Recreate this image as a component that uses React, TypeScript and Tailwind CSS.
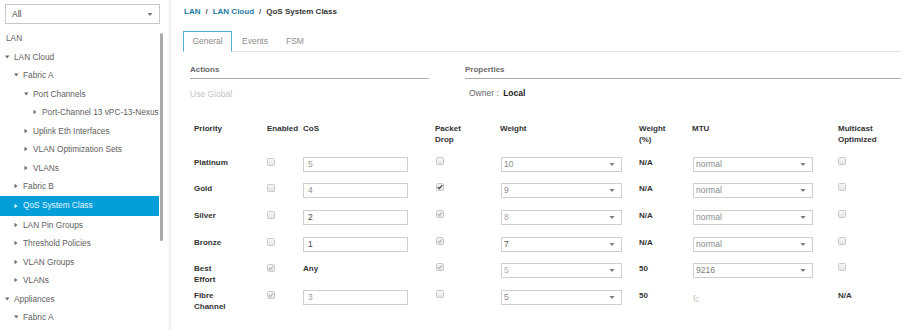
import React from 'react';

type Arrow = 'down' | 'right' | null;

const treeItems: { label: string; level: number; arrow: Arrow; active?: boolean }[] = [
  { label: 'LAN', level: 0, arrow: null },
  { label: 'LAN Cloud', level: 0, arrow: 'down' },
  { label: 'Fabric A', level: 1, arrow: 'down' },
  { label: 'Port Channels', level: 2, arrow: 'down' },
  { label: 'Port-Channel 13 vPC-13-Nexus', level: 3, arrow: 'right' },
  { label: 'Uplink Eth Interfaces', level: 2, arrow: 'right' },
  { label: 'VLAN Optimization Sets', level: 2, arrow: 'right' },
  { label: 'VLANs', level: 2, arrow: 'right' },
  { label: 'Fabric B', level: 1, arrow: 'right' },
  { label: 'QoS System Class', level: 1, arrow: 'right', active: true },
  { label: 'LAN Pin Groups', level: 1, arrow: 'right' },
  { label: 'Threshold Policies', level: 1, arrow: 'right' },
  { label: 'VLAN Groups', level: 1, arrow: 'right' },
  { label: 'VLANs', level: 1, arrow: 'right' },
  { label: 'Appliances', level: 0, arrow: 'down' },
  { label: 'Fabric A', level: 1, arrow: 'down' },
];

const indent = ['pl-[5px]', 'pl-[14px]', 'pl-[24px]', 'pl-[33px]'];

function Caret({ dir, light }: { dir: 'down' | 'right'; light?: boolean }) {
  const fill = light ? '#e6f5fb' : '#6b6b6b';
  return (
    <svg width="8" height="8" viewBox="0 0 8 8" className="shrink-0">
      {dir === 'down' ? <path d="M0 2.5h4.5L2.25 5.5z" fill={fill} /> : <path d="M0.5 1.8v4.4L3.5 4z" fill={fill} />}
    </svg>
  );
}

function Check({ checked, dark }: { checked?: boolean; dark?: boolean }) {
  return (
    <span className="flex h-[8px] w-[8px] items-center justify-center rounded-[1.5px] border border-[#c9c9c9] bg-gradient-to-b from-[#f7f7f7] to-[#e4e4e4]">
      {checked && (
        <svg width="6" height="6" viewBox="0 0 6 6">
          <path d="M0.8 3.2 2.3 4.7 5.2 1" fill="none" stroke={dark ? '#3a3a3a' : '#b5b5b5'} strokeWidth="1.2" />
        </svg>
      )}
    </span>
  );
}

function TextBox({ value, tone }: { value: string; tone: string }) {
  return (
    <div className={`mt-px flex h-[15px] w-[105px] items-center border border-[#cfcfcf] bg-white pl-[4px] text-[8.5px] ${tone}`}>
      {value}
    </div>
  );
}

function Select({ value, tone, w }: { value: string; tone: string; w: string }) {
  return (
    <div className={`mt-px flex h-[15px] ${w} items-center justify-between border border-[#cfcfcf] bg-white pl-[2px] pr-[6px] text-[8.5px] ${tone}`}>
      <span>{value}</span>
      <svg width="6" height="5" viewBox="0 0 6 5">
        <path d="M0.5 1h5L3 4z" fill="#7a7a7a" />
      </svg>
    </div>
  );
}

const rows = [
  { name: ['Platinum'], enabled: false, cos: '5', cosTone: 'text-[#9a9a9a]', drop: false, dropDark: false, weight: '10', wTone: 'text-[#8a8a8a]', pct: 'N/A', mtu: 'normal', mtuTone: 'text-[#8a8a8a]', multi: 'box' },
  { name: ['Gold'], enabled: false, cos: '4', cosTone: 'text-[#8a8a8a]', drop: true, dropDark: true, weight: '9', wTone: 'text-[#8a8a8a]', pct: 'N/A', mtu: 'normal', mtuTone: 'text-[#8a8a8a]', multi: 'box' },
  { name: ['Silver'], enabled: false, cos: '2', cosTone: 'text-[#444]', drop: true, dropDark: false, weight: '8', wTone: 'text-[#a5a5a5]', pct: 'N/A', mtu: 'normal', mtuTone: 'text-[#8a8a8a]', multi: 'box' },
  { name: ['Bronze'], enabled: false, cos: '1', cosTone: 'text-[#444]', drop: true, dropDark: false, weight: '7', wTone: 'text-[#555]', pct: 'N/A', mtu: 'normal', mtuTone: 'text-[#8a8a8a]', multi: 'box' },
  { name: ['Best', 'Effort'], enabled: true, cos: null, cosTone: '', drop: true, dropDark: false, weight: '5', wTone: 'text-[#b0b0b0]', pct: '50', mtu: '9216', mtuTone: 'text-[#7a7a7a]', multi: 'box' },
  { name: ['Fibre', 'Channel'], enabled: true, cos: '3', cosTone: 'text-[#9a9a9a]', drop: false, dropDark: false, weight: '5', wTone: 'text-[#8a8a8a]', pct: '50', mtu: null, mtuTone: '', multi: 'na' },
];

const cols = 'grid grid-cols-[73px_36px_132px_65px_139px_53px_146px_1fr]';

export default function App() {
  return (
    <div className="flex h-[330px] w-[901px] overflow-hidden bg-white font-['Liberation_Sans',Arial,sans-serif] text-[#5e5e60]">
      {/* sidebar */}
      <aside className="flex w-[171px] shrink-0 flex-col border-r-2 border-[#f0f0f0]">
        <div className="px-[5px] pt-[4px]">
          <div className="flex h-[20px] w-[155px] items-center justify-between border border-[#c8c8c8] pl-[6px] pr-[6px] text-[8.5px] text-[#444]">
            <span>All</span>
            <svg width="6" height="5" viewBox="0 0 6 5">
              <path d="M0.5 1h5L3 4z" fill="#777" />
            </svg>
          </div>
        </div>
        <div className="mt-[5px] flex flex-1">
          <ul className="w-[159px] text-[8.3px]">
            {treeItems.map((it, i) => (
              <li
                key={i}
                className={`flex items-center gap-[1px] ${it.active ? 'h-[20px] bg-[#049fd9] text-[#e8f6fc]' : 'h-[18.5px]'} ${it.arrow ? indent[it.level] : 'pl-[6px]'}`}
              >
                {it.arrow && <Caret dir={it.arrow} light={it.active} />}
                <span className="whitespace-nowrap">{it.label}</span>
              </li>
            ))}
          </ul>
          <div className="ml-[1px] mt-[4px] h-[208px] w-[3px] rounded-full bg-[#a9a9a9]" />
        </div>
      </aside>

      {/* main */}
      <main className="flex-1 pl-[12px]">
        <div className="h-[31px] pl-px pt-[7px] text-[8px] font-bold leading-[10px]">
          <span className="text-[#1b7aa3]">LAN</span>
          <span className="px-[5px] text-[#58585b]">/</span>
          <span className="text-[#1b7aa3]">LAN Cloud</span>
          <span className="px-[5px] text-[#58585b]">/</span>
          <span className="text-[#333]">QoS System Class</span>
        </div>

        <div className="flex h-[21px] items-end border-b border-[#e4e4e4] text-[8.5px] text-[#8e8e8e]">
          <div className="-mb-px flex h-[21px] w-[49px] items-center justify-center border border-b-white border-[#57acd9] bg-white">
            General
          </div>
          <div className="flex h-[20px] items-center pl-[10px] pr-[18px]">Events</div>
          <div className="flex h-[20px] items-center">FSM</div>
        </div>

        <div className="mt-[13px] flex pl-[7px]">
          <div className="w-[239px]">
            <div className="border-b border-[#ababab] pb-[3px] text-[8px] font-bold leading-[10px] text-[#6a6a6a]">Actions</div>
            <div className="mt-[9px] text-[8.5px] text-[#c4c4c4]">Use Global</div>
          </div>
          <div className="ml-[36px] flex-1">
            <div className="border-b border-[#ababab] pb-[3px] text-[8px] font-bold leading-[10px] text-[#6a6a6a]">Properties</div>
            <div className="mt-[8px] pl-[4px] text-[8.5px] text-[#666]">
              Owner : <span className="ml-[2px] font-bold text-[#222]">Local</span>
            </div>
          </div>
        </div>

        <div className="mt-[22px] pl-[11px] text-[8px] leading-[11px]">
          <div className={`${cols} h-[33px] font-bold text-[#333]`}>
            <div>Priority</div>
            <div>Enabled</div>
            <div>CoS</div>
            <div>Packet<br />Drop</div>
            <div>Weight</div>
            <div>Weight<br />(%)</div>
            <div>MTU</div>
            <div>Multicast<br />Optimized</div>
          </div>
          {rows.map((r, i) => (
            <div key={i} className={`${cols} h-[26.6px] items-start`}>
              <div className="pt-[1px] font-bold text-[#333]">
                {r.name.map((n, j) => (
                  <div key={j}>{n}</div>
                ))}
              </div>
              <div className="pt-[2px]">
                <Check checked={r.enabled} />
              </div>
              <div>
                {r.cos ? <TextBox value={r.cos} tone={r.cosTone} /> : <div className="pt-[1px] font-bold text-[#333]">Any</div>}
              </div>
              <div className="pl-px pt-[1px]">
                <Check checked={r.drop} dark={r.dropDark} />
              </div>
              <div className="pl-px">
                <Select value={r.weight} tone={r.wTone} w="w-[121px]" />
              </div>
              <div className="pt-[1px] font-bold text-[#333]">{r.pct}</div>
              <div className="pl-px">
                {r.mtu ? (
                  <Select value={r.mtu} tone={r.mtuTone} w="w-[120px]" />
                ) : (
                  <div className="pt-[5px] text-[8.5px] text-[#c8c8c8]">fc</div>
                )}
              </div>
              <div className="pt-[1px]">
                {r.multi === 'box' ? <Check /> : <span className="font-bold text-[#333]">N/A</span>}
              </div>
            </div>
          ))}
        </div>
      </main>
    </div>
  );
}
